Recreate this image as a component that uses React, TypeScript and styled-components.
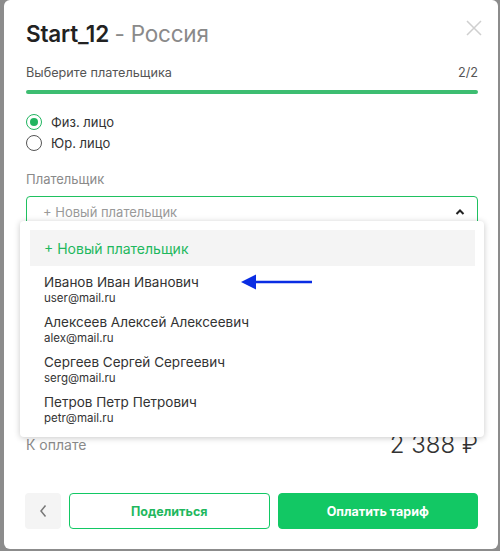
import React from "react";
import styled, { createGlobalStyle } from "styled-components";

const Global = createGlobalStyle`
  html, body { margin: 0; padding: 0; background: #8c8c8c; }
  body { font-family: Inter, "Noto Sans", Roboto, sans-serif; overflow: hidden; }
  * { box-sizing: border-box; }
`;

const Page = styled.div`
  width: 500px;
  height: 551px;
  padding: 0 2px 2px 4px;
  display: flex;
`;

const Modal = styled.div`
  position: relative;
  flex: 1;
  background: #fff;
  border-radius: 6px;
  padding: 19px 20px 20px 22px;
  display: flex;
  flex-direction: column;
`;

const Title = styled.h1`
  margin: 0;
  font-size: 22.5px;
  line-height: 30px;
  font-weight: 600;
  color: #222;
  letter-spacing: -0.2px;
`;

const TitleMuted = styled.span`
  font-weight: 400;
  color: #8a8a8a;
`;

const Close = styled.button`
  position: absolute;
  top: 20px;
  right: 16px;
  width: 16px;
  height: 16px;
  padding: 0;
  border: 0;
  background: none;
  display: flex;
`;

const StepRow = styled.div`
  margin-top: 16px;
  display: flex;
  justify-content: space-between;
  font-size: 12.7px;
  line-height: 16px;
  color: #555;
`;

const Progress = styled.div`
  margin-top: 9px;
  height: 4px;
  border-radius: 2px;
  background: #3dbd71;
`;

const RadioGroup = styled.div`
  margin-top: 20px;
  display: flex;
  flex-direction: column;
  gap: 5px;
`;

const RadioRow = styled.label`
  display: flex;
  align-items: center;
  gap: 9px;
  font-size: 13px;
  line-height: 16px;
  color: #333;
`;

const RadioCircle = styled.span<{ $checked?: boolean }>`
  width: 16px;
  height: 16px;
  border-radius: 50%;
  border: 1px solid ${(p) => (p.$checked ? "#21b560" : "#555")};
  display: flex;
  align-items: center;
  justify-content: center;
  &::after {
    content: "";
    width: 8px;
    height: 8px;
    border-radius: 50%;
    background: ${(p) => (p.$checked ? "#21b560" : "transparent")};
  }
`;

const FieldLabel = styled.div`
  margin-top: 20px;
  font-size: 13px;
  line-height: 16px;
  color: #8a8a8a;
`;

const SelectWrap = styled.div`
  position: relative;
  margin-top: 9px;
`;

const SelectBox = styled.div`
  height: 32px;
  border: 1px solid #1fc160;
  border-radius: 4px;
  padding: 0 12px 0 16px;
  display: flex;
  align-items: center;
  justify-content: space-between;
  font-size: 13px;
  color: #999;
`;

const Menu = styled.div`
  position: absolute;
  left: -6px;
  right: -6px;
  top: 25px;
  z-index: 2;
  background: #fff;
  border-radius: 4px;
  box-shadow: 0 1px 6px rgba(0, 0, 0, 0.22);
  padding: 9px 9px 11px 10px;
  display: flex;
  flex-direction: column;
`;

const NewItem = styled.div`
  height: 36px;
  background: #f4f4f4;
  padding: 0 14px;
  display: flex;
  align-items: center;
  font-size: 14px;
  color: #1fb85e;
`;

const Item = styled.div`
  position: relative;
  height: 40px;
  padding: 7px 14px 0;
  display: flex;
  flex-direction: column;
`;

const ItemName = styled.div`
  font-size: 13.5px;
  line-height: 18px;
  color: #333;
`;

const ItemMail = styled.div`
  font-size: 11.5px;
  line-height: 14px;
  color: #333;
`;

const Arrow = styled.svg`
  position: absolute;
  left: 211px;
  top: 8px;
`;

const PayRow = styled.div`
  margin-top: 201px;
  display: flex;
  align-items: center;
  justify-content: space-between;
  height: 30px;
`;

const PayLabel = styled.span`
  font-size: 14px;
  color: #8a8a8a;
`;

const PayValue = styled.span`
  font-size: 24px;
  font-weight: 300;
  color: #333;
`;

const Actions = styled.div`
  margin-top: auto;
  display: flex;
  gap: 8px;
  height: 36px;
`;

const BackButton = styled.button`
  width: 36px;
  margin-left: -1px;
  border: 0;
  border-radius: 4px;
  background: #f4f4f4;
  display: flex;
  align-items: center;
  justify-content: center;
  padding: 0;
`;

const ActionButton = styled.button<{ $primary?: boolean }>`
  flex: 1;
  border-radius: 4px;
  border: 1px solid #12c864;
  background: ${(p) => (p.$primary ? "#12c864" : "#fff")};
  color: ${(p) => (p.$primary ? "#fff" : "#1fb85e")};
  font-family: inherit;
  font-size: 12.5px;
  font-weight: 700;
`;

const people = [
  { name: "Иванов Иван Иванович", mail: "user@mail.ru" },
  { name: "Алексеев Алексей Алексеевич", mail: "alex@mail.ru" },
  { name: "Сергеев Сергей Сергеевич", mail: "serg@mail.ru" },
  { name: "Петров Петр Петрович", mail: "petr@mail.ru" },
];

export default function App() {
  return (
    <>
      <Global />
      <Page>
        <Modal>
          <Title>
            Start_12 <TitleMuted>- Россия</TitleMuted>
          </Title>
          <Close aria-label="Закрыть">
            <svg width="16" height="16" viewBox="0 0 16 16">
              <path d="M1 1L15 15M15 1L1 15" stroke="#cfcfcf" strokeWidth="1.5" />
            </svg>
          </Close>
          <StepRow>
            <span>Выберите плательщика</span>
            <span>2/2</span>
          </StepRow>
          <Progress />
          <RadioGroup>
            <RadioRow>
              <RadioCircle $checked />
              Физ. лицо
            </RadioRow>
            <RadioRow>
              <RadioCircle />
              Юр. лицо
            </RadioRow>
          </RadioGroup>
          <FieldLabel>Плательщик</FieldLabel>
          <SelectWrap>
            <SelectBox>
              <span>+ Новый плательщик</span>
              <svg width="10" height="8" viewBox="0 0 10 8">
                <path d="M1.5 6L5 2.5L8.5 6" fill="none" stroke="#222" strokeWidth="2" />
              </svg>
            </SelectBox>
            <Menu>
              <NewItem>+ Новый плательщик</NewItem>
              {people.map((p, i) => (
                <Item key={p.mail}>
                  <ItemName>{p.name}</ItemName>
                  <ItemMail>{p.mail}</ItemMail>
                  {i === 0 && (
                    <Arrow width="72" height="16" viewBox="0 0 72 16">
                      <path d="M14 8H71" stroke="#0a2de3" strokeWidth="2.5" />
                      <path d="M0 8L15 0.5V15.5Z" fill="#0a2de3" />
                    </Arrow>
                  )}
                </Item>
              ))}
            </Menu>
          </SelectWrap>
          <PayRow>
            <PayLabel>К оплате</PayLabel>
            <PayValue>2 388 ₽</PayValue>
          </PayRow>
          <Actions>
            <BackButton aria-label="Назад">
              <svg width="8" height="14" viewBox="0 0 8 14">
                <path d="M6.5 1.5L2 7L6.5 12.5" fill="none" stroke="#777" strokeWidth="1.5" />
              </svg>
            </BackButton>
            <ActionButton>Поделиться</ActionButton>
            <ActionButton $primary>Оплатить тариф</ActionButton>
          </Actions>
        </Modal>
      </Page>
    </>
  );
}
